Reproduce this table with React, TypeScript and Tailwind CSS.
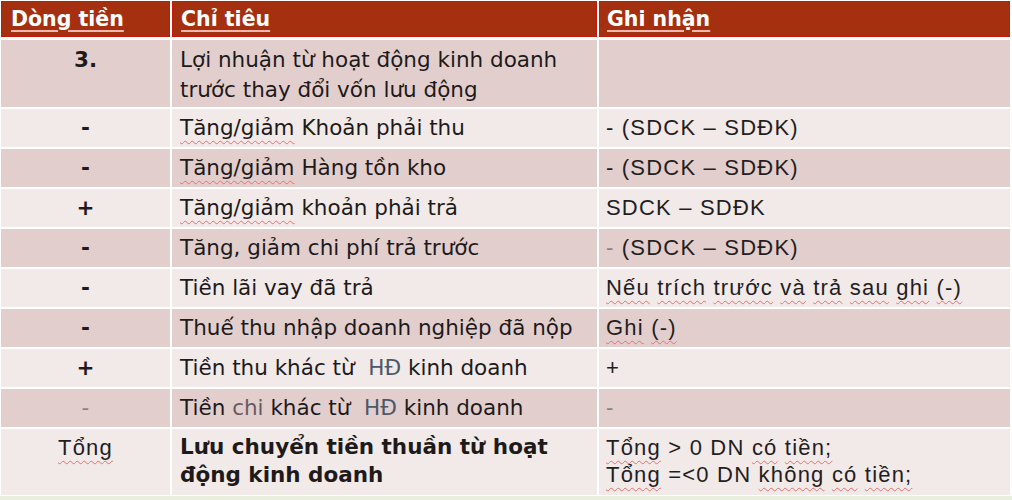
import React from "react";

const sq = "underline decoration-wavy decoration-[#e87070] decoration-1 underline-offset-[5px]";

type Row = {
  a: React.ReactNode;
  b: React.ReactNode;
  c: React.ReactNode;
  dark: boolean;
  tall?: boolean;
};

const rows: Row[] = [
  {
    a: <span className="font-bold">3.</span>,
    b: (
      <>
        Lợi nhuận từ hoạt động kinh doanh
        <br />
        trước thay đổi vốn lưu động
      </>
    ),
    c: null,
    dark: true,
    tall: true,
  },
  {
    a: <span className="font-bold">-</span>,
    b: (
      <>
        <span className={sq}>Tăng/giảm</span> Khoản phải thu
      </>
    ),
    c: "- (SDCK – SDĐK)",
    dark: false,
  },
  {
    a: <span className="font-bold">-</span>,
    b: (
      <>
        <span className={sq}>Tăng/giảm</span> Hàng tồn kho
      </>
    ),
    c: "- (SDCK – SDĐK)",
    dark: true,
  },
  {
    a: <span className="font-bold">+</span>,
    b: (
      <>
        <span className={sq}>Tăng/giảm</span> khoản phải trả
      </>
    ),
    c: "SDCK – SDĐK",
    dark: false,
  },
  {
    a: <span className="font-bold">-</span>,
    b: "Tăng, giảm chi phí trả trước",
    c: (
      <>
        <span className="text-[#8a8080]">-</span> (SDCK – SDĐK)
      </>
    ),
    dark: true,
  },
  {
    a: <span className="font-bold">-</span>,
    b: "Tiền lãi vay đã trả",
    c: (
      <>
        <span className={sq}>Nếu</span> <span className={sq}>trích</span>{" "}
        <span className={sq}>trước</span> <span className={sq}>và</span>{" "}
        <span className={sq}>trả</span> <span className={sq}>sau</span>{" "}
        <span className={sq}>ghi</span> <span className={sq}>(-)</span>
      </>
    ),
    dark: false,
  },
  {
    a: <span className="font-bold">-</span>,
    b: "Thuế thu nhập doanh nghiệp đã nộp",
    c: (
      <>
        <span className={sq}>Ghi</span> <span className={sq}>(-)</span>
      </>
    ),
    dark: true,
  },
  {
    a: <span className="font-bold">+</span>,
    b: (
      <>
        Tiền thu khác từ&nbsp; <span className="text-[#4a5868]">HĐ</span> kinh doanh
      </>
    ),
    c: "+",
    dark: false,
  },
  {
    a: <span className="text-[#8a8080]">-</span>,
    b: (
      <>
        Tiền <span className="text-[#6a5a60]">chi</span> khác từ&nbsp;{" "}
        <span className="text-[#4a5868]">HĐ</span> kinh doanh
      </>
    ),
    c: <span className="text-[#8a8080]">-</span>,
    dark: true,
  },
];

export default function App() {
  const body = "font-['DejaVu_Sans',sans-serif] text-[21.5px] text-[#1e1a1a]";
  const col3 = "font-['Liberation_Sans',sans-serif] text-[22px] tracking-[1.2px] text-[#231e1e]";
  return (
    <div className="w-[1012px] h-[500px] bg-white overflow-hidden flex flex-col">
      <div className="flex flex-col gap-[2px] pl-[1px] pt-[1px]">
        {/* header */}
        <div className="flex gap-[2px] h-[36px] mb-[1px] font-['DejaVu_Sans',sans-serif] text-[20.5px] font-bold text-white">
          <div className="w-[169px] bg-[#a5300f] border border-[#c8170e] flex items-center pl-[9px]">
            <span className="underline decoration-[#f0b8b0] underline-offset-[4px]">Dòng tiền</span>
          </div>
          <div className="w-[425px] bg-[#a5300f] border border-[#c8170e] flex items-center pl-[8px]">
            <span className="underline decoration-[#f0b8b0] underline-offset-[4px]">Chỉ tiêu</span>
          </div>
          <div className="w-[411px] bg-[#a5300f] border border-[#c8170e] flex items-center pl-[7px]">
            <span className="underline decoration-[#f0b8b0] underline-offset-[4px]">Ghi nhận</span>
          </div>
        </div>

        {rows.map((r, i) => {
          const bg = r.dark ? "bg-[#e3cece]" : "bg-[#f2e9e9]";
          const h = r.tall ? "h-[67px] items-start pt-[5px]" : "h-[38px] items-center";
          return (
            <div key={i} className="flex gap-[2px]">
              <div className={`w-[169px] ${bg} ${h} flex justify-center ${body} leading-[30px]`}>{r.a}</div>
              <div className={`w-[425px] ${bg} ${h} flex pl-[8px] ${body} leading-[30px] whitespace-nowrap`}>
                <div>{r.b}</div>
              </div>
              <div className={`w-[411px] ${bg} ${h} flex pl-[7px] ${col3} leading-[30px] whitespace-nowrap`}>
                <div>{r.c}</div>
              </div>
            </div>
          );
        })}

        {/* total row */}
        <div className="flex gap-[2px]">
          <div className="w-[169px] bg-[#f2e9e9] h-[66px] flex justify-center pt-[5px] font-['Liberation_Sans',sans-serif] text-[22px] tracking-[1.2px] text-[#231e1e] leading-[27px]">
            <span className={sq}>Tổng</span>
          </div>
          <div className={`w-[425px] bg-[#f2e9e9] h-[66px] flex pl-[8px] pt-[4px] font-['DejaVu_Sans',sans-serif] text-[21.5px] text-[#1e1a1a] font-bold leading-[28px] whitespace-nowrap`}>
            <div>
              Lưu chuyển tiền thuần từ hoạt
              <br />
              động kinh doanh
            </div>
          </div>
          <div className={`w-[411px] bg-[#f2e9e9] h-[66px] flex pl-[7px] pt-[5px] ${col3} leading-[27px] whitespace-nowrap`}>
            <div>
              <span className={sq}>Tổng</span> &gt; 0 DN <span className={sq}>có</span>{" "}
              <span className={sq}>tiền;</span>
              <br />
              <span className={sq}>Tổng</span> =&lt;0 DN <span className={sq}>không</span>{" "}
              <span className={sq}>có</span> <span className={sq}>tiền;</span>
            </div>
          </div>
        </div>
      </div>
      <div className="flex-1 mt-[1px] bg-[#e8efdc]" />
    </div>
  );
}
